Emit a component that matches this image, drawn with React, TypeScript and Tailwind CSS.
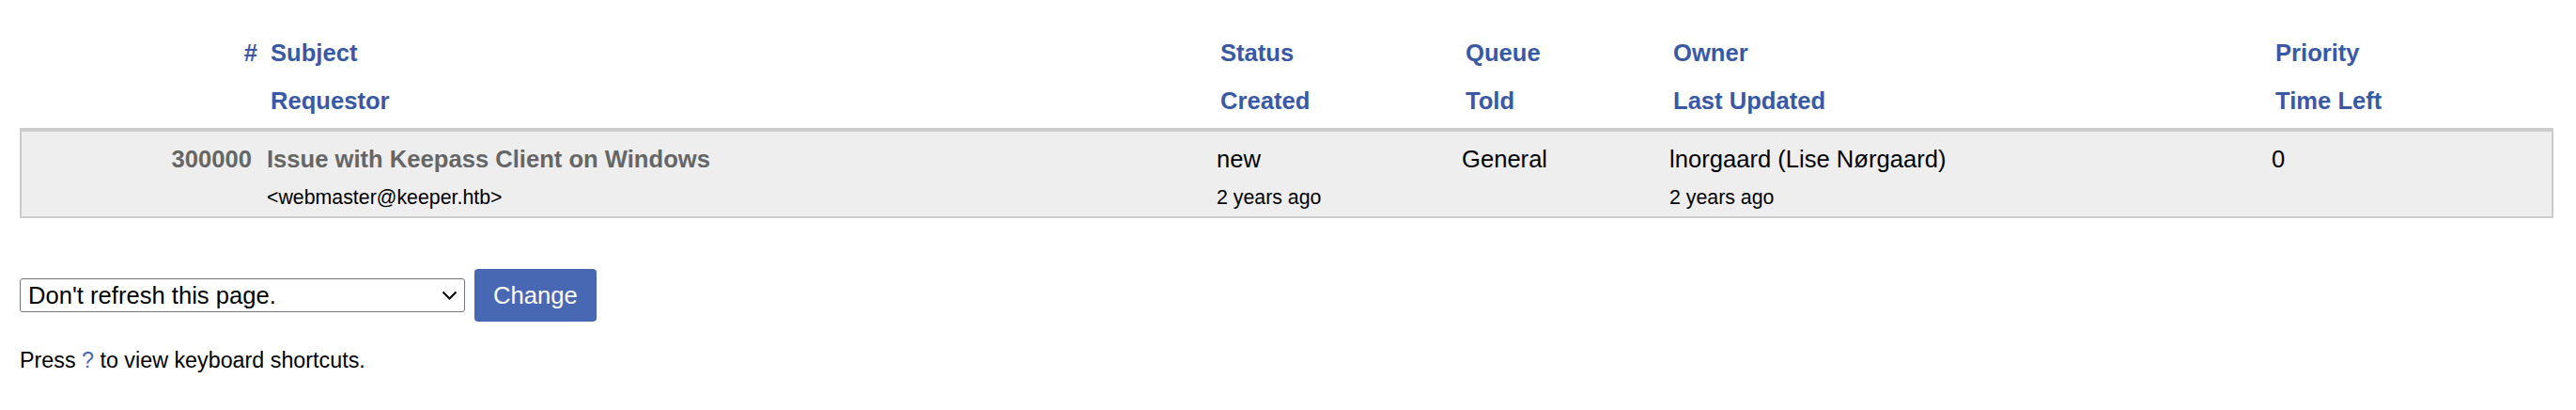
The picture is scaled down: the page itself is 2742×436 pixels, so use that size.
import React from 'react';

const cols = 'grid grid-cols-[253px_1011px_261px_221px_641px_1fr]';

const App: React.FC = () => {
  return (
    <div className="min-h-screen bg-white pl-[21px] pr-[24px] font-['Liberation_Sans',Arial,sans-serif] text-black">
      {/* column headers */}
      <div className={`${cols} ml-[6px] pt-[31px] text-[25.6px] font-bold text-[#3858a8]`}>
        <div className="h-[51px] pr-[6px] text-right leading-[51px]">#</div>
        <div className="h-[51px] px-2 leading-[51px]">Subject</div>
        <div className="h-[51px] px-2 leading-[51px]">Status</div>
        <div className="h-[51px] px-2 leading-[51px]">Queue</div>
        <div className="h-[51px] px-2 leading-[51px]">Owner</div>
        <div className="h-[51px] px-2 leading-[51px]">Priority</div>

        <div className="h-[51px]" />
        <div className="h-[51px] px-2 leading-[51px]">Requestor</div>
        <div className="h-[51px] px-2 leading-[51px]">Created</div>
        <div className="h-[51px] px-2 leading-[51px]">Told</div>
        <div className="h-[51px] px-2 leading-[51px]">Last Updated</div>
        <div className="h-[51px] px-2 leading-[51px]">Time Left</div>
      </div>

      {/* ticket row */}
      <div className="mt-[3px] border-2 border-t-4 border-[#cccccc] bg-[#eeeeee] pt-[9px] pb-[4px]">
        <div className={`${cols} text-[25.6px] leading-[40px]`}>
          <div className="h-[40px] px-2 text-right font-bold text-[#666666]">300000</div>
          <div className="h-[40px] px-2 font-bold text-[#666666]">Issue with Keepass Client on Windows</div>
          <div className="h-[40px] px-2">new</div>
          <div className="h-[40px] px-2">General</div>
          <div className="h-[40px] px-2">lnorgaard (Lise Nørgaard)</div>
          <div className="h-[40px] px-2">0</div>
        </div>
        <div className={`${cols} mt-[5px] text-[21.33px] leading-[32px]`}>
          <div className="h-[32px]" />
          <div className="h-[32px] px-2">&lt;webmaster@keeper.htb&gt;</div>
          <div className="h-[32px] px-2">2 years ago</div>
          <div className="h-[32px]" />
          <div className="h-[32px] px-2">2 years ago</div>
          <div className="h-[32px]" />
        </div>
      </div>

      {/* refresh form */}
      <div className="mt-[54px] flex items-center">
        <div className="relative">
          <select
            defaultValue="never"
            className="h-[36px] w-[474px] appearance-none rounded-[3px] border border-[#767676] bg-white pl-[8px] text-[25.6px] leading-[34px] text-black"
          >
            <option value="never">Don't refresh this page.</option>
            <option value="120">Refresh this page every 2 minutes.</option>
            <option value="300">Refresh this page every 5 minutes.</option>
          </select>
          <svg
            className="pointer-events-none absolute right-[8px] top-[13px] h-[10px] w-[17px]"
            viewBox="0 0 17 10"
            fill="none"
            stroke="#000"
            strokeWidth="2"
          >
            <path d="M1.5 1.5 L8.5 8.5 L15.5 1.5" />
          </svg>
        </div>
        <button className="ml-[10px] h-[56px] rounded-[4px] bg-[#4868b4] px-[20px] text-[25.6px] text-white">
          Change
        </button>
      </div>

      <p className="mt-[25px] text-[23.3px] leading-[32px]">
        Press <span className="text-[#4868b4]">?</span> to view keyboard shortcuts.
      </p>
    </div>
  );
};

export default App;
